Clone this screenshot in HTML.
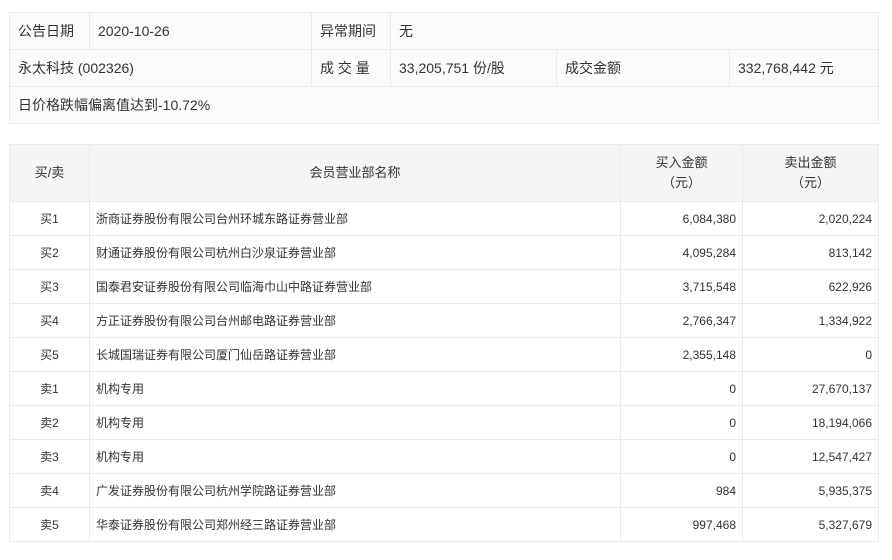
<!DOCTYPE html>
<html><head><meta charset="utf-8"><style>
body{margin:0;background:#fff;font-family:"Liberation Sans","Noto Sans CJK SC",sans-serif;color:#333;}
table{border-collapse:collapse;position:absolute;left:9px;table-layout:fixed;}
td{border:1px solid #ebebeb;padding:0;}
#t1{top:12px;width:870px;background:#fcfbf9;font-size:14px;}
#t1 td{height:36px;padding-left:8px;}
#t2{top:144px;width:870px;font-size:12px;}
#t2 th{background:#f5f5f5;border:1px solid #ebebeb;font-weight:normal;font-size:13px;height:56px;line-height:20px;padding:0;}
#t2 td{height:33px;}
.c{text-align:center}.r{text-align:right;padding-right:6px}.l{padding-left:6px}
</style></head><body>
<table id="t1">
<colgroup><col style="width:80px"><col style="width:222px"><col style="width:79px"><col style="width:166px"><col style="width:173px"><col></colgroup>
<tr><td>公告日期</td><td>2020-10-26</td><td>异常期间</td><td colspan="3">无</td></tr>
<tr><td colspan="2">永太科技 (002326)</td><td>成 交 量</td><td>33,205,751 份/股</td><td>成交金额</td><td>332,768,442 元</td></tr>
<tr><td colspan="6">日价格跌幅偏离值达到-10.72%</td></tr>
</table>
<table id="t2">
<colgroup><col style="width:80px"><col style="width:531px"><col style="width:122px"><col></colgroup>
<tr><th>买/卖</th><th>会员营业部名称</th><th>买入金额<br>（元）</th><th>卖出金额<br>（元）</th></tr>
<tr><td class="c">买1</td><td class="l">浙商证券股份有限公司台州环城东路证券营业部</td><td class="r">6,084,380</td><td class="r">2,020,224</td></tr>
<tr><td class="c">买2</td><td class="l">财通证券股份有限公司杭州白沙泉证券营业部</td><td class="r">4,095,284</td><td class="r">813,142</td></tr>
<tr><td class="c">买3</td><td class="l">国泰君安证券股份有限公司临海巾山中路证券营业部</td><td class="r">3,715,548</td><td class="r">622,926</td></tr>
<tr><td class="c">买4</td><td class="l">方正证券股份有限公司台州邮电路证券营业部</td><td class="r">2,766,347</td><td class="r">1,334,922</td></tr>
<tr><td class="c">买5</td><td class="l">长城国瑞证券有限公司厦门仙岳路证券营业部</td><td class="r">2,355,148</td><td class="r">0</td></tr>
<tr><td class="c">卖1</td><td class="l">机构专用</td><td class="r">0</td><td class="r">27,670,137</td></tr>
<tr><td class="c">卖2</td><td class="l">机构专用</td><td class="r">0</td><td class="r">18,194,066</td></tr>
<tr><td class="c">卖3</td><td class="l">机构专用</td><td class="r">0</td><td class="r">12,547,427</td></tr>
<tr><td class="c">卖4</td><td class="l">广发证券股份有限公司杭州学院路证券营业部</td><td class="r">984</td><td class="r">5,935,375</td></tr>
<tr><td class="c">卖5</td><td class="l">华泰证券股份有限公司郑州经三路证券营业部</td><td class="r">997,468</td><td class="r">5,327,679</td></tr>
</table>
</body></html>
